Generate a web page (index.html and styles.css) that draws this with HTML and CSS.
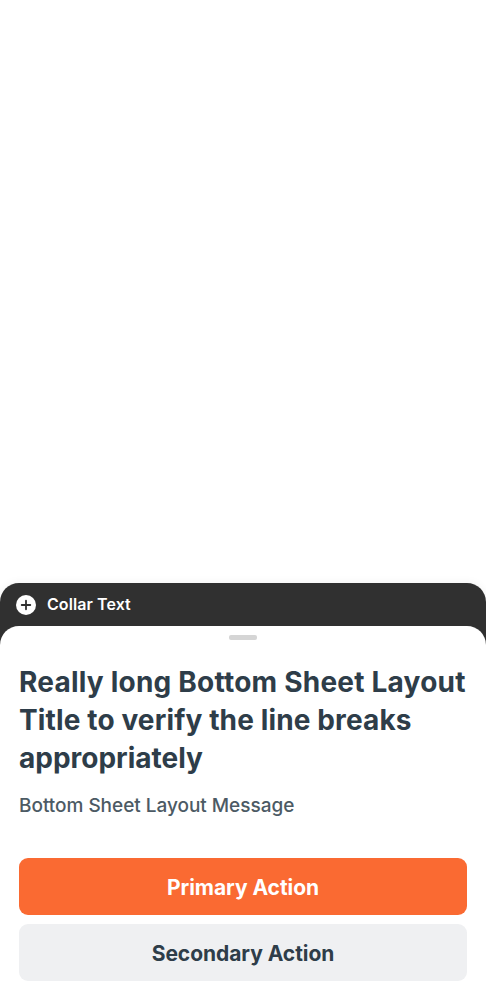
FILE: index.html
```html
<!DOCTYPE html>
<html lang="en">
<head>
<meta charset="utf-8">
<title>Bottom Sheet</title>
<link rel="stylesheet" href="styles.css">
</head>
<body>
<main class="screen">
  <section class="sheet">
    <header class="collar">
      <svg class="collar-icon" viewBox="0 0 20 20" aria-hidden="true"><circle cx="10" cy="10" r="10" fill="#fff"/><path d="M10 5.7v8.6M5.7 10h8.6" stroke="#303030" stroke-width="1.8" stroke-linecap="round"/></svg>
      <span class="collar-text">Collar Text</span>
    </header>
    <div class="panel">
      <div class="handle"></div>
      <h1 class="title"><span class="line line-a">Really long Bottom Sheet Layout</span> <span class="line line-b">Title to verify the line breaks</span> <span class="line line-c">appropriately</span></h1>
      <p class="message">Bottom Sheet Layout Message</p>
      <div class="actions">
        <button class="button primary">Primary Action</button>
        <button class="button secondary">Secondary Action</button>
      </div>
    </div>
  </section>
</main>
</body>
</html>
```
FILE: styles.css
```css
* { box-sizing: border-box; }
body { margin: 0; background: #fff; font-family: Inter, "Liberation Sans", sans-serif; }
.screen { height: 1000px; display: flex; flex-direction: column; justify-content: flex-end; overflow: hidden; }
.sheet { height: 416.6px; background: #303030; border-radius: 19px 19px 0 0; box-shadow: 0 0 10px rgba(0, 0, 0, 0.06); }
.collar { height: 42.6px; padding: 0 16px; display: flex; align-items: center; gap: 11px; }
.collar-icon { width: 20px; height: 20px; }
.collar-text { padding-bottom: 2px; color: #fff; font-size: 16px; line-height: 24px; font-weight: 600; letter-spacing: 0.08px; }
.panel { height: 374px; padding: 9px 19px 0; background: #fff; border-radius: 19px 19px 0 0; display: flex; flex-direction: column; }
.handle { width: 28px; height: 5px; flex: none; align-self: center; border-radius: 2px; background: #d5d5d5; }
.title { margin: 23px 0 0; color: #2e3d49; font-size: 28px; line-height: 38px; font-weight: 700; }
.line { display: block; white-space: nowrap; }
.line-a { letter-spacing: 0.22px; }
.line-b { letter-spacing: 0.13px; }
.line-c { letter-spacing: 0; }
.message { margin: 15px 0 0; color: #4c5a64; font-size: 19px; line-height: 28px; font-weight: 500; letter-spacing: -0.03px; }
.actions { margin-top: 38px; display: grid; gap: 9px; }
.button { height: 57px; padding: 2px 0 0; border: 0; border-radius: 9px; font: 700 21px/28px Inter, sans-serif; letter-spacing: -0.05px; }
.primary { color: #fff; background: #fa6a32; }
.secondary { color: #2e3d49; background: #eff0f2; }
```
